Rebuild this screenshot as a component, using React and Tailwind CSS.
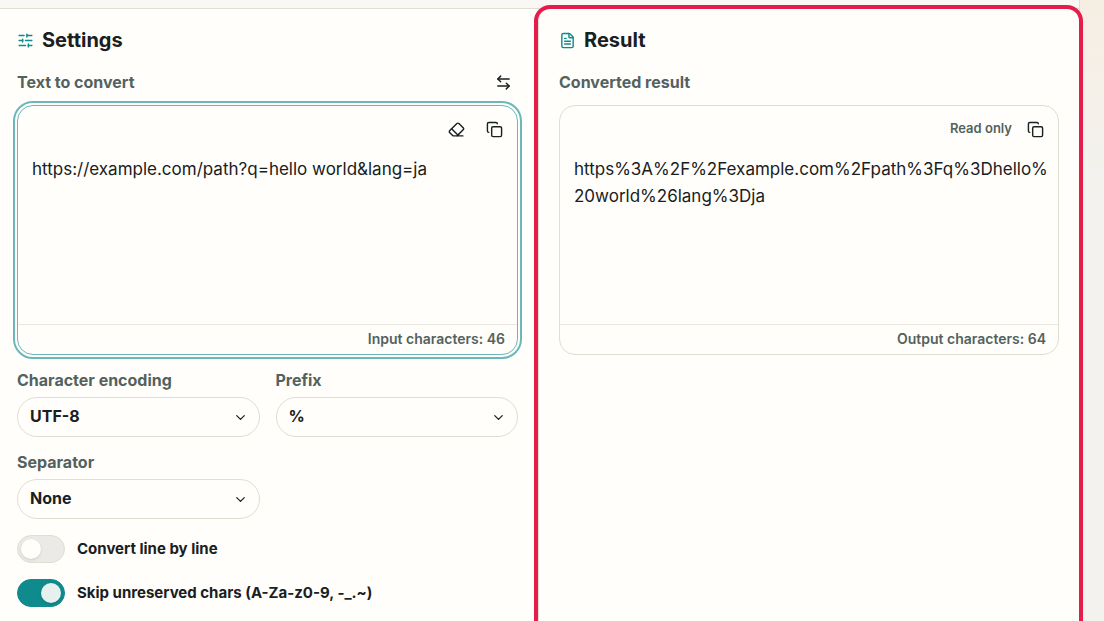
import { ArrowLeftRight, ChevronDown, Copy, Eraser, FileText, SlidersHorizontal } from "lucide-react";
import { useId, useState } from "react";

function Heading({ icon: Icon, children }) {
  return (
    <h2 className="flex h-[30px] items-center gap-2 text-xl font-bold">
      <Icon size={17} className="text-[#0f8b8d]" aria-hidden="true" />
      {children}
    </h2>
  );
}

function IconButton({ label, icon: Icon }) {
  return (
    <button type="button" aria-label={label} className="flex size-[30px] items-center justify-center rounded-full">
      <Icon size={17} aria-hidden="true" />
    </button>
  );
}

function FieldHeader({ htmlFor, label, children }) {
  return (
    <div className="mt-3 mb-2 flex h-[30px] items-center justify-between">
      <label htmlFor={htmlFor} className="text-base font-bold text-[#53625f]">{label}</label>
      {children}
    </div>
  );
}

function TextPanel({ id, value, onChange, readOnly, focused, tools, footer }) {
  return (
    <div className={focused
      ? "rounded-2xl border border-[#6bb7ba] outline-2 outline-offset-2 outline-[#6bb7ba]"
      : "rounded-2xl border border-[#dedfd3]"}
    >
      <div className="flex h-[46px] items-center justify-end gap-2 px-2">{tools}</div>
      <textarea
        id={id}
        value={value}
        onChange={onChange}
        readOnly={readOnly}
        spellCheck={false}
        className="block h-43 w-full resize-none overflow-hidden break-all pt-1 pr-2 pl-3.5 text-[17px] leading-[27px] outline-none"
      />
      <p className="h-[30px] border-t border-[#e8e8e1] px-3 text-right text-sm leading-7 font-semibold text-[#53625f]">
        {footer}
      </p>
    </div>
  );
}

function SelectField({ label, options }) {
  const id = useId();
  return (
    <div className="min-w-0">
      <label htmlFor={id} className="block text-base leading-[26px] font-bold text-[#53625f]">{label}</label>
      <div className="relative mt-1">
        <select
          id={id}
          className="h-10 w-full appearance-none rounded-full border border-[#dedfd3] bg-[#fffefa] px-3 pb-0.5 text-base font-bold"
        >
          {options.map((option) => (
            <option key={option}>{option}</option>
          ))}
        </select>
        <span className="pointer-events-none absolute inset-y-0 right-3 flex items-center">
          <ChevronDown size={15} aria-hidden="true" />
        </span>
      </div>
    </div>
  );
}

function Toggle({ label, initial }) {
  const [on, setOn] = useState(initial);
  return (
    <label className="flex h-7 items-center gap-3 text-[15px] font-bold">
      <input
        type="checkbox"
        role="switch"
        checked={on}
        onChange={(e) => setOn(e.target.checked)}
        className="flex h-7 w-12 shrink-0 appearance-none items-center rounded-full border border-[#dedfd3] bg-[#ebeae7] px-[3px] before:size-5 before:rounded-full before:bg-[#fffefa] before:shadow-sm checked:justify-end checked:border-[#0f8b8d] checked:bg-[#0f8b8d] checked:before:bg-[#e6f0ee]"
      />
      {label}
    </label>
  );
}

export default function App() {
  const [text, setText] = useState("https://example.com/path?q=hello world&lang=ja");
  const result = encodeURIComponent(text);
  return (
    <div className="min-h-screen bg-linear-to-b from-[#f6eee3] to-[#f3f2ee] to-30% pr-6 font-['Inter','Liberation_Sans',sans-serif] text-[#182022]">
      <div className="flex min-h-screen flex-col border-r border-[#dedfd3] bg-[#f9f8f4] pt-2">
        <main className="grid flex-1 grid-cols-[538fr_541fr] border-t border-[#dedfd3] bg-[#fffefa]">
          <section className="min-w-0 pt-4 pr-5 pl-[17px]">
            <Heading icon={SlidersHorizontal}>Settings</Heading>
            <FieldHeader htmlFor="source" label="Text to convert">
              <IconButton label="Swap input and result" icon={ArrowLeftRight} />
            </FieldHeader>
            <TextPanel
              id="source"
              value={text}
              onChange={(e) => setText(e.target.value)}
              focused
              tools={
                <>
                  <IconButton label="Clear text" icon={Eraser} />
                  <IconButton label="Copy text" icon={Copy} />
                </>
              }
              footer={`Input characters: ${text.length}`}
            />
            <div className="mt-3 grid grid-cols-2 gap-x-4 gap-y-3">
              <SelectField label="Character encoding" options={["UTF-8"]} />
              <SelectField label="Prefix" options={["%"]} />
              <SelectField label="Separator" options={["None"]} />
            </div>
            <div className="mt-4 flex flex-col gap-4">
              <Toggle label="Convert line by line" initial={false} />
              <Toggle label="Skip unreserved chars (A-Za-z0-9, -_.~)" initial={true} />
            </div>
          </section>
          <section className="min-w-0 rounded-t-xl border-l border-[#dedfd3] px-5 pt-4 outline-4 outline-[#e51d4b]">
            <Heading icon={FileText}>Result</Heading>
            <FieldHeader htmlFor="result" label="Converted result" />
            <TextPanel
              id="result"
              value={result}
              readOnly
              tools={
                <>
                  <span className="text-[13px] font-semibold text-[#53625f]">Read only</span>
                  <IconButton label="Copy result" icon={Copy} />
                </>
              }
              footer={`Output characters: ${result.length}`}
            />
          </section>
        </main>
      </div>
    </div>
  );
}
